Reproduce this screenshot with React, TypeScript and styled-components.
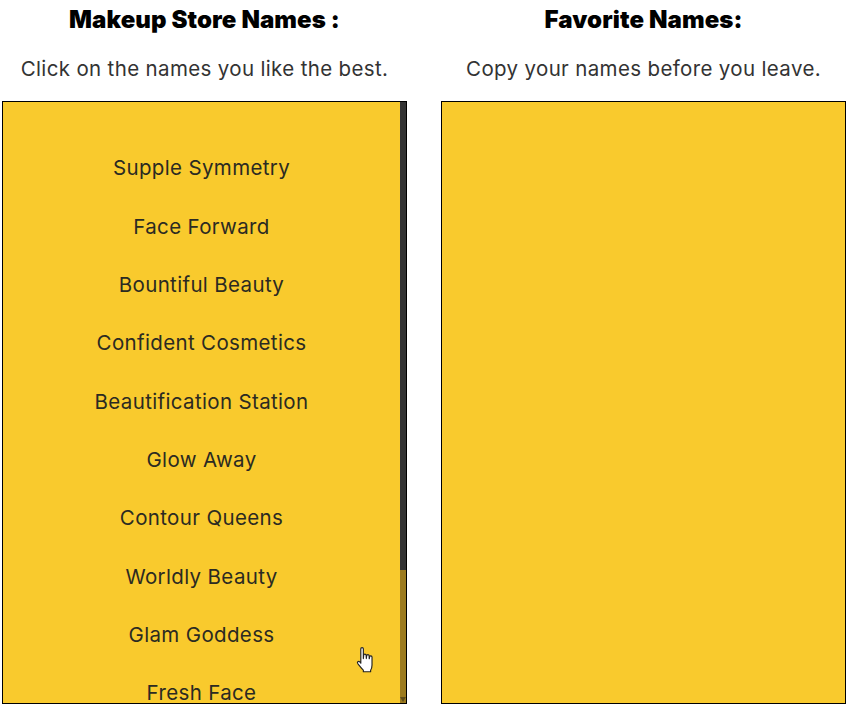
import styled, { createGlobalStyle } from "styled-components";

const GlobalStyle = createGlobalStyle`
  html, body {
    margin: 0;
    padding: 0;
    background: #fff;
    overflow: hidden;
  }
`;

const Page = styled.div`
  display: grid;
  grid-template-columns: 405px 405px;
  column-gap: 34px;
  padding: 0 2px;
  width: 848px;
  height: 710px;
  box-sizing: border-box;
`;

const Column = styled.section`
  display: flex;
  flex-direction: column;
  position: relative;
`;

const Heading = styled.h2`
  margin: 4px 0 0;
  height: 32px;
  line-height: 32px;
  font-family: Inter, "Liberation Sans", sans-serif;
  font-size: 24px;
  font-weight: 900;
  letter-spacing: 0.1px;
  color: #000;
  text-align: center;
`;

const Hint = styled.p`
  margin: 17px 0 0;
  height: 32px;
  line-height: 32px;
  font-family: Inter, "Liberation Sans", sans-serif;
  font-size: 20.5px;
  letter-spacing: 0.35px;
  color: #333;
  text-align: center;
`;

const Panel = styled.div`
  position: relative;
  margin-top: 16px;
  height: 603px;
  box-sizing: border-box;
  border: 1px solid #000;
  background: #f9ca2d;
  overflow: hidden;
`;

const NameList = styled.ul`
  margin: 0;
  padding: 37.3px 6px 0 0;
  list-style: none;
`;

const NameItem = styled.li`
  height: 58.33px;
  line-height: 58.33px;
  font-family: Inter, "Liberation Sans", sans-serif;
  font-size: 20.5px;
  letter-spacing: 0.35px;
  color: #2b2a22;
  text-align: center;
  cursor: pointer;
`;

const ScrollTrack = styled.div`
  position: absolute;
  top: 0;
  right: 0;
  bottom: 0;
  width: 6px;
  background: #9c7b1f;

  &::after {
    content: "";
    position: absolute;
    left: 0;
    bottom: 1px;
    border-left: 3px solid transparent;
    border-right: 3px solid transparent;
    border-top: 5px solid #5f4d1c;
  }
`;

const ScrollThumb = styled.div`
  height: 468px;
  background: #333;
`;

const Pointer = styled.svg`
  position: absolute;
  left: 354px;
  top: 647px;
  width: 20px;
  height: 26px;
`;

const names = [
  "Supple Symmetry",
  "Face Forward",
  "Bountiful Beauty",
  "Confident Cosmetics",
  "Beautification Station",
  "Glow Away",
  "Contour Queens",
  "Worldly Beauty",
  "Glam Goddess",
  "Fresh Face",
];

const App = () => {
  return (
    <>
      <GlobalStyle />
      <Page>
        <Column>
          <Heading>Makeup Store Names :</Heading>
          <Hint>Click on the names you like the best.</Hint>
          <Panel>
            <NameList>
              {names.map((name) => (
                <NameItem key={name}>{name}</NameItem>
              ))}
            </NameList>
            <ScrollTrack>
              <ScrollThumb />
            </ScrollTrack>
          </Panel>
          <Pointer viewBox="2 1 15 22.5">
            <path
              d="M5 2.5c0-1.3 2.2-1.3 2.2 0V11l.3-3c0-1.2 2-1.2 2.1 0l.2 3 .3-2.5c.1-1.2 2-1.1 2.1.1l.1 2.6.4-1.8c.2-1.1 1.9-.9 2 .3v6.8c0 2-.4 3.3-1.2 4.6v1.3H7.2v-1.4c-1.4-1.2-3-3.5-4.8-5.7-.9-1.2.4-2.4 1.6-1.6L5 15z"
              fill="#fff"
              stroke="#222"
              strokeWidth="1"
              strokeLinejoin="round"
            />
          </Pointer>
        </Column>
        <Column>
          <Heading>Favorite Names:</Heading>
          <Hint>Copy your names before you leave.</Hint>
          <Panel />
        </Column>
      </Page>
    </>
  );
};

export default App;
